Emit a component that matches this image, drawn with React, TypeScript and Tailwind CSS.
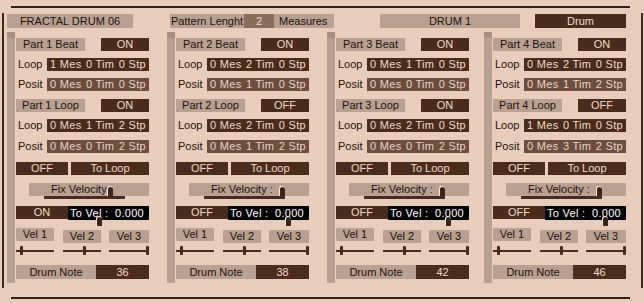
import React from "react";

type Part = {
  n: number;
  beatOn: string;
  beatLoop: number[];
  beatPosit: number[];
  loopOn: string;
  loopLoop: number[];
  loopPosit: number[];
  velOn: string;
  note: number;
  fixThumb: number;
  velThumb: number;
};

const PARTS: Part[] = [
  { n: 1, beatOn: "ON", beatLoop: [1, 0, 0], beatPosit: [0, 0, 0], loopOn: "ON", loopLoop: [0, 1, 2], loopPosit: [0, 0, 2], velOn: "ON", note: 36, fixThumb: 91, velThumb: 80 },
  { n: 2, beatOn: "ON", beatLoop: [0, 2, 0], beatPosit: [0, 1, 0], loopOn: "OFF", loopLoop: [0, 2, 0], loopPosit: [0, 1, 2], velOn: "OFF", note: 38, fixThumb: 103, velThumb: 109 },
  { n: 3, beatOn: "ON", beatLoop: [0, 1, 0], beatPosit: [0, 0, 0], loopOn: "ON", loopLoop: [0, 2, 0], loopPosit: [0, 0, 2], velOn: "OFF", note: 42, fixThumb: 103, velThumb: 109 },
  { n: 4, beatOn: "ON", beatLoop: [0, 2, 0], beatPosit: [0, 1, 2], loopOn: "OFF", loopLoop: [1, 0, 0], loopPosit: [0, 3, 2], velOn: "OFF", note: 46, fixThumb: 103, velThumb: 109 },
];

const COL_GAP = ["ml-0", "ml-[18px]", "ml-[18px]", "ml-[15px]"];

function Thumb({ left, top }: { left: number; top: number }) {
  return (
    <div
      className="absolute h-[10px] w-[6px] rounded-t-full border-l border-t border-[#f6e8de] bg-[#3e2418]"
      style={{ left, top }}
    />
  );
}

function ValueRow({ label, v, dark }: { label: string; v: number[]; dark: boolean }) {
  return (
    <div className="flex h-[13px] items-center">
      <div className="w-[31px] pl-[2px] text-[#1c120c]">{label}</div>
      <div
        className={`flex h-full w-[102px] items-center justify-between px-[3px] tracking-[0.3px] ${
          dark ? "bg-[#4a2c1f] text-[#f1dac9]" : "bg-[#6b4e40] text-[#ead3c3]"
        }`}
      >
        <span>{v[0]} Mes</span>
        <span>{v[1]} Tim</span>
        <span>{v[2]} Stp</span>
      </div>
    </div>
  );
}

function HeadRow({ label, state }: { label: string; state: string }) {
  return (
    <div className="flex h-[13px] items-center">
      <div className="flex h-full w-[69px] items-center justify-center bg-[#b8a193] text-[#1c120c]">
        {label}
      </div>
      <div className="ml-[16px] flex h-full w-[48px] items-center justify-center bg-[#4a2c1f] text-[#f1dac9]">
        {state}
      </div>
    </div>
  );
}

function Column({ p, idx }: { p: Part; idx: number }) {
  return (
    <div className={`flex h-[251px] w-[142px] ${COL_GAP[idx]}`}>
      <div className="flex w-[8px] flex-col">
        <div className="h-[6px] bg-[#a88f81]" />
        <div className="flex-1 bg-[#b8a193]" />
      </div>
      <div className="ml-[1px] flex w-[133px] flex-col pt-[6px]">
        <HeadRow label={`Part ${p.n} Beat`} state={p.beatOn} />
        <div className="mt-[7px]">
          <ValueRow label="Loop" v={p.beatLoop} dark />
        </div>
        <div className="mt-[7px]">
          <ValueRow label="Posit" v={p.beatPosit} dark={false} />
        </div>
        <div className="mt-[8px]">
          <HeadRow label={`Part ${p.n} Loop`} state={p.loopOn} />
        </div>
        <div className="mt-[7px]">
          <ValueRow label="Loop" v={p.loopLoop} dark />
        </div>
        <div className="mt-[8px]">
          <ValueRow label="Posit" v={p.loopPosit} dark={false} />
        </div>

        <div className="mt-[9px] flex h-[13px] text-[#f1dac9]">
          <div className="flex w-[52px] items-center justify-center bg-[#4a2c1f]">OFF</div>
          <div className="ml-[3px] flex w-[78px] items-center justify-center bg-[#4a2c1f]">To Loop</div>
        </div>

        <div className="relative mt-[8px] h-[16px]">
          <div className="ml-[13px] flex h-[13px] w-[120px] items-center bg-[#b8a193] pl-[22px] text-[#1c120c]">
            Fix Velocity :
          </div>
          <div className="ml-[28px] h-[3px] w-[81px] bg-[#4a2c1f]" />
          <Thumb left={p.fixThumb} top={3} />
        </div>

        <div className="relative mt-[7px] flex h-[14px]">
          <div className="flex h-[13px] w-[52px] items-center justify-center bg-[#4a2c1f] text-[#f1dac9]">
            {p.velOn}
          </div>
          <div className="flex w-[81px] items-center justify-between bg-black pl-[2px] pr-[5px] text-white tracking-[0.3px]">
            <span>To Vel :</span>
            <span>0.000</span>
          </div>
          <Thumb left={p.velThumb} top={10} />
        </div>

        <div className="mt-[8px] flex items-start text-[#1c120c]">
          <div className="flex h-[13px] w-[38px] items-center justify-center bg-[#b8a193]">Vel 1</div>
          <div className="ml-[9px] mt-[2px] flex h-[13px] w-[38px] items-center justify-center bg-[#b8a193]">Vel 2</div>
          <div className="ml-[8px] mt-[2px] flex h-[13px] w-[40px] items-center justify-center bg-[#b8a193]">Vel 3</div>
        </div>

        <div className="relative mt-[3px] flex h-[10px] items-center">
          <div className="h-[2px] w-[38px] bg-[#4a2c1f]" />
          <div className="ml-[9px] h-[2px] w-[38px] bg-[#4a2c1f]" />
          <div className="ml-[8px] h-[2px] w-[40px] bg-[#4a2c1f]" />
          <div className="absolute left-[4px] top-0 h-[9px] w-[3px] rounded-[1px] bg-[#4a2c1f]" />
          <div className="absolute left-[67px] top-0 h-[9px] w-[3px] rounded-[1px] bg-[#4a2c1f]" />
          <div className="absolute left-[130px] top-0 h-[9px] w-[3px] rounded-[1px] bg-[#4a2c1f]" />
        </div>

        <div className="mt-[9px] flex h-[14px]">
          <div className="flex w-[80px] items-center justify-center bg-[#b8a193] text-[#1c120c]">Drum Note</div>
          <div className="flex w-[53px] items-center justify-center bg-[#4a2c1f] text-[#f1dac9]">{p.note}</div>
        </div>
      </div>
    </div>
  );
}

export default function App() {
  return (
    <div
      className="flex h-[303px] w-[644px] flex-col overflow-hidden bg-[#e8cdbc] text-[11px] leading-none"
      style={{ fontFamily: '"Liberation Sans", Arial, sans-serif' }}
    >
      <div className="ml-[11px] mt-[6px] h-[2px] w-[619px] bg-[#2e2119]" />
      <div className="flex h-[289px]">
        <div className="ml-[2px] mt-[5px] h-[275px] w-[2px] bg-[#3a2a20]" />
        <div className="ml-[3px] flex w-[622px] flex-col pt-[6px]">
          <div className="flex h-[14px]">
            <div className="flex w-[126px] items-center justify-center bg-[#b8a193] text-[#1c120c]">
              FRACTAL DRUM 06
            </div>
            <div className="ml-[37px] flex w-[74px] items-center pl-[1px] bg-[#b8a193] text-[#1c120c]">
              Pattern Lenght
            </div>
            <div className="flex w-[30px] items-center justify-center bg-[#8a6b5c] text-[#f1dac9]">2</div>
            <div className="flex w-[60px] items-center pl-[5px] bg-[#b8a193] text-[#1c120c]">Measures</div>
            <div className="ml-[46px] flex w-[140px] items-center justify-center bg-[#b8a193] text-[#1c120c]">
              DRUM 1
            </div>
            <div className="ml-[15px] flex w-[91px] items-center justify-center bg-[#4a2c1f] text-[#f1dac9]">
              Drum
            </div>
          </div>
          <div className="mt-[4px] flex">
            {PARTS.map((p, i) => (
              <Column key={p.n} p={p} idx={i} />
            ))}
          </div>
        </div>
        <div className="ml-[12px] mt-[5px] h-[275px] w-[2px] bg-[#3a2a20]" />
      </div>
      <div className="ml-[11px] h-[2px] w-[619px] bg-[#2e2119]" />
    </div>
  );
}
